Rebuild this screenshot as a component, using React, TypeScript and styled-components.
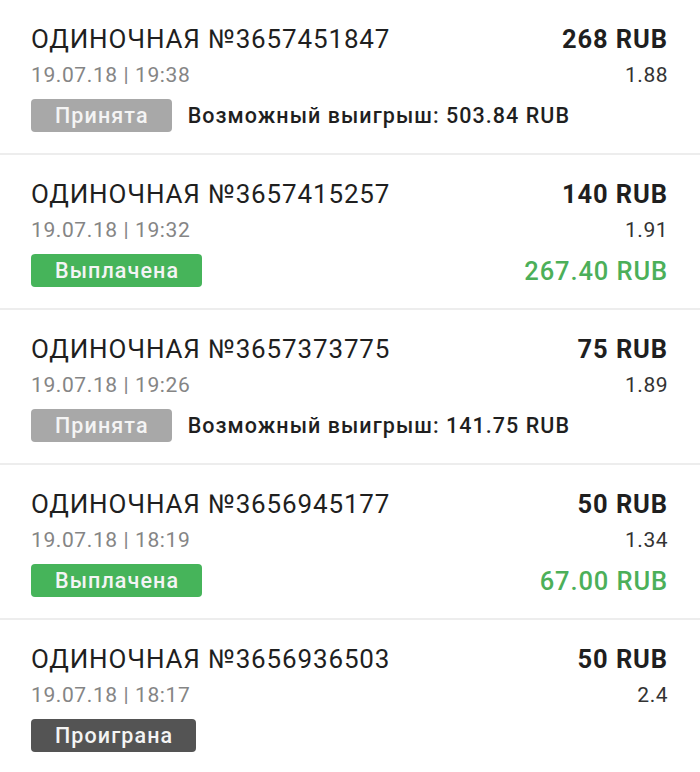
import React from "react";
import styled, { createGlobalStyle } from "styled-components";

const Global = createGlobalStyle`
  html, body { margin: 0; padding: 0; background: #fff; }
  body { font-family: Roboto, "Noto Sans", sans-serif; }
`;

const List = styled.div`
  display: flex;
  flex-direction: column;
  width: 700px;
`;

const Card = styled.div`
  display: flex;
  flex-direction: column;
  padding: 24px 32px 21px 31px;
  border-bottom: 2px solid #ededed;
`;

const Row = styled.div<{ $mt?: number }>`
  display: flex;
  justify-content: space-between;
  align-items: center;
  margin-top: ${(p) => p.$mt ?? 0}px;
`;

const Title = styled.div`
  font-size: 26px;
  line-height: 30px;
  letter-spacing: 0.85px;
  color: #1f1f1f;
`;

const Amount = styled.div`
  font-size: 25.5px;
  line-height: 30px;
  font-weight: 700;
  letter-spacing: 0.9px;
  color: #1f1f1f;
`;

const DateText = styled.div`
  font-size: 21px;
  line-height: 26px;
  letter-spacing: 0.6px;
  color: #858585;
`;

const Coef = styled.div`
  font-size: 21px;
  line-height: 26px;
  letter-spacing: 0.5px;
  color: #333;
`;

const Left = styled.div`
  display: flex;
  align-items: center;
  gap: 16px;
`;

type Status = "accepted" | "paid" | "lost";

const badgeBg: Record<Status, string> = {
  accepted: "#a8a8a8",
  paid: "#46b45a",
  lost: "#545454",
};

const Badge = styled.div<{ $status: Status }>`
  height: 33px;
  padding: 0 23px 0 24px;
  border-radius: 4px;
  background: ${(p) => badgeBg[p.$status]};
  color: #f4f4f4;
  font-size: 21.5px;
  font-weight: 500;
  letter-spacing: 1.1px;
  display: flex;
  align-items: center;
`;

const Possible = styled.div`
  font-size: 21.5px;
  font-weight: 500;
  letter-spacing: 1.05px;
  color: #1f1f1f;
`;

const Payout = styled.div`
  font-size: 25.5px;
  font-weight: 500;
  letter-spacing: 0.9px;
  color: #4caf59;
`;

type Bet = {
  id: string;
  date: string;
  amount: string;
  coef: string;
  status: Status;
  possible?: string;
  payout?: string;
};

const bets: Bet[] = [
  { id: "3657451847", date: "19.07.18 | 19:38", amount: "268 RUB", coef: "1.88", status: "accepted", possible: "503.84 RUB" },
  { id: "3657415257", date: "19.07.18 | 19:32", amount: "140 RUB", coef: "1.91", status: "paid", payout: "267.40 RUB" },
  { id: "3657373775", date: "19.07.18 | 19:26", amount: "75 RUB", coef: "1.89", status: "accepted", possible: "141.75 RUB" },
  { id: "3656945177", date: "19.07.18 | 18:19", amount: "50 RUB", coef: "1.34", status: "paid", payout: "67.00 RUB" },
  { id: "3656936503", date: "19.07.18 | 18:17", amount: "50 RUB", coef: "2.4", status: "lost" },
];

const label: Record<Status, string> = {
  accepted: "Принята",
  paid: "Выплачена",
  lost: "Проиграна",
};

export default function App() {
  return (
    <>
      <Global />
      <List>
        {bets.map((b) => (
          <Card key={b.id}>
            <Row>
              <Title>ОДИНОЧНАЯ №{b.id}</Title>
              <Amount>{b.amount}</Amount>
            </Row>
            <Row $mt={8}>
              <DateText>{b.date}</DateText>
              <Coef>{b.coef}</Coef>
            </Row>
            <Row $mt={11}>
              <Left>
                <Badge $status={b.status}>{label[b.status]}</Badge>
                {b.possible && <Possible>Возможный выигрыш: {b.possible}</Possible>}
              </Left>
              {b.payout && <Payout>{b.payout}</Payout>}
            </Row>
          </Card>
        ))}
      </List>
    </>
  );
}
